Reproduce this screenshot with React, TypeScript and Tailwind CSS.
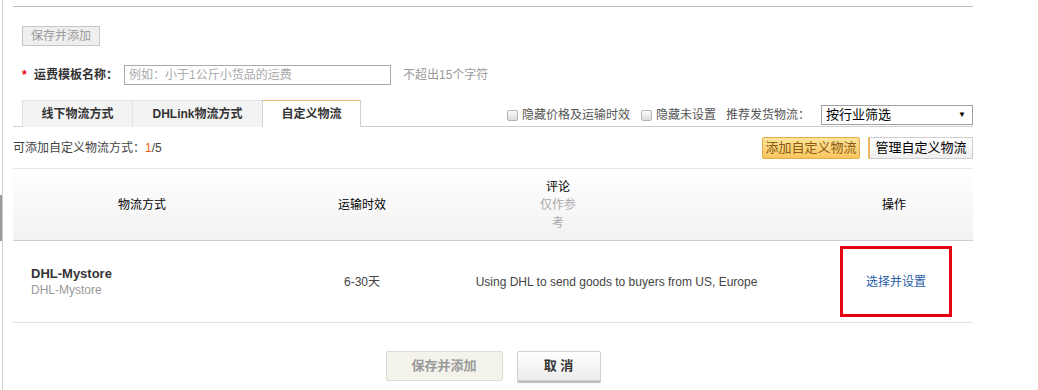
import React from "react";

const Box = () => (
  <span className="inline-block w-[11px] h-[11px] rounded-[2px] border border-[#b5b5b5] bg-gradient-to-b from-[#fafafa] to-[#dcdcdc] mr-[4px]" />
);

export default function App() {
  return (
    <div
      className="relative w-[1038px] h-[390px] bg-white text-[12px] text-[#333] overflow-hidden"
      style={{ fontFamily: '"Liberation Sans", "Noto Sans CJK SC", sans-serif' }}
    >
      <div className="absolute left-0 top-[195px] w-[2px] h-[46px] bg-[#9a9a9a]" />
      <div className="ml-[2px] h-[390px] border-l border-[#cfcfcf] pl-[10px]">
        <div className="w-[960px]">
          <div className="h-[6px]" />
          <div className="h-px bg-[#bdbdbd]" />

          <div className="mt-[19px] ml-[9px] w-[78px] h-[20px] border border-[#c6c6c6] bg-[#efefef] text-[#9a9a9a] flex items-center justify-center leading-none">
            保存并添加
          </div>

          <div className="mt-[19px] ml-[9px] flex items-center h-[20px]">
            <span className="text-[#e60012] w-[12px] text-[12px] font-bold">*</span>
            <span className="font-bold text-[#333] w-[90px]">运费模板名称：</span>
            <div className="w-[267px] h-[20px] border border-[#a9a9a9] flex items-center pl-[4px] text-[#aaa]">
              例如：小于1公斤小货品的运费
            </div>
            <span className="ml-[12px] text-[#999]">不超出15个字符</span>
          </div>

          <div className="mt-[14px] h-[28px] flex items-end border-b border-[#cfcfcf]">
            <div className="ml-[9px] flex h-[27px] -mb-px">
              <div className="w-[110px] bg-[#f3f3f3] border-l border-t border-[#e2e2e2] flex items-center justify-center font-bold text-[#333]">
                线下物流方式
              </div>
              <div className="w-[130px] bg-[#f3f3f3] border-l border-t border-[#e2e2e2] flex items-center justify-center font-bold text-[#333]">
                DHLink物流方式
              </div>
              <div className="w-[99px] bg-white border-t border-t-[#eab77b] border-x border-x-[#cfcfcf] flex items-center justify-center font-bold text-[#333]">
                自定义物流
              </div>
            </div>
            <div className="ml-auto flex items-center h-[20px] mb-px text-[#555]">
              <Box />
              <span>隐藏价格及运输时效</span>
              <span className="ml-[11px] flex items-center">
                <Box />
                <span>隐藏未设置</span>
              </span>
              <span className="ml-[10px] mr-[11px]">推荐发货物流：</span>
              <div className="w-[152px] h-[20px] border border-[#a0a0a0] flex items-center justify-between pl-[4px] pr-[6px] text-[13px] text-black">
                <span>按行业筛选</span>
                <span className="text-[8px]">▼</span>
              </div>
            </div>
          </div>

          <div className="h-[41px] flex items-center">
            <span className="text-[#444]">
              可添加自定义物流方式：<span className="text-[#e8601c]">1</span>/5
            </span>
            <div className="ml-auto flex items-center mt-px">
              <div className="h-[22px] w-[98px] border border-[#e6ad4d] rounded-[2px] bg-gradient-to-b from-[#fde39b] to-[#f9c65f] flex items-center justify-center text-[13px] text-[#8a5a10]">
                添加自定义物流
              </div>
              <div className="ml-[8px] h-[22px] w-[105px] border border-[#cfcfcf] border-l-2 border-l-[#f2b560] bg-gradient-to-b from-white to-[#efefef] flex items-center justify-center text-[13px] text-black">
                管理自定义物流
              </div>
            </div>
          </div>

          <div className="border-t border-[#e6e6e6] h-[73px] border-b border-b-[#cfcfcf] bg-gradient-to-b from-white to-[#f2f2f2] flex items-center text-black">
            <div className="w-[258px] text-center">物流方式</div>
            <div className="w-[182px] text-center">运输时效</div>
            <div className="w-[210px] flex justify-center">
              <div className="w-[36px] text-center leading-[18px]">
                评论
                <span className="text-[#aaa]">仅作参考</span>
              </div>
            </div>
            <div className="ml-auto w-[158px] text-center">操作</div>
          </div>

          <div className="h-[82px] border-b border-[#e2e2e2] flex items-center">
            <div className="w-[258px] pl-[18px]">
              <div className="font-bold text-[13px] text-[#333] leading-[16px]">DHL-Mystore</div>
              <div className="text-[#999] leading-[16px]">DHL-Mystore</div>
            </div>
            <div className="w-[182px] text-center text-[#444]">6-30天</div>
            <div className="w-[327px] text-center text-[#444]">
              Using DHL to send goods to buyers from US, Europe
            </div>
            <div className="ml-auto w-[158px] flex justify-center">
              <div className="ml-[4px] w-[112px] h-[71px] border-[3px] border-[#e60012] flex items-center justify-center text-[#2a5ca8]">
                选择并设置
              </div>
            </div>
          </div>

          <div className="mt-[28px] flex justify-center gap-[14px]">
            <div className="w-[117px] h-[30px] border border-[#dcdcd2] rounded-[2px] bg-[#f3f3ec] flex items-center justify-center font-bold text-[13px] text-[#9a9a9a]">
              保存并添加
            </div>
            <div className="w-[84px] h-[30px] border border-[#d0d0d0] rounded-[2px] bg-gradient-to-b from-white to-[#ececec] shadow-[0_2px_0_#bdbdbd] flex items-center justify-center font-bold text-[13px] text-[#333]">
              取 消
            </div>
          </div>
        </div>
      </div>
    </div>
  );
}
